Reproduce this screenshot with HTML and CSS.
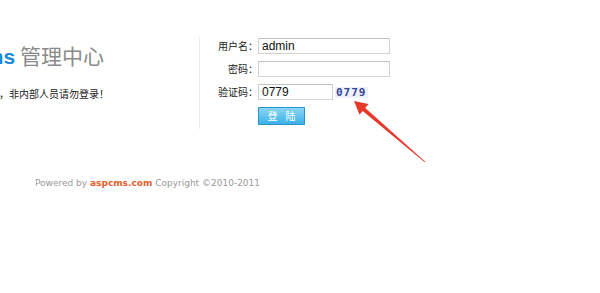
FILE: index.html
```html
<!DOCTYPE html>
<html lang="zh-CN">
<head>
  <meta charset="UTF-8" />
  <title>管理中心</title>
  <link rel="stylesheet" href="styles.css">
</head>
<body>
  <div class="page">
    <div class="main">
      <div class="brand">
        <h1 class="title"><b>aspcms</b> 管理中心</h1>
        <p class="notice">网站管理后台，非内部人员请勿登录！</p>
      </div>

      <form class="login">
        <label class="label" for="user">用户名：</label>
        <input class="field" type="text" id="user" value="admin" />

        <label class="label" for="pass">密码：</label>
        <input class="field" type="password" id="pass" />

        <label class="label" for="code">验证码：</label>
        <div class="code-row">
          <input class="field short" type="text" id="code" value="0779" />
          <span class="captcha">0779</span>
        </div>

        <span></span>
        <div><button class="btn" type="button">登 陆</button></div>
      </form>
    </div>

    <div class="footer">Powered by <a href="#">aspcms.com</a> Copyright &copy;2010-2011</div>

    <svg class="arrow" width="100" height="80" viewBox="0 0 100 80">
      <polygon points="14,6 28.5,9 25.3,12.9 85.3,66.7 84.7,67.3 22.7,15.9 19.5,19.8" fill="#e8382c" />
    </svg>
  </div>
</body>
</html>
```

FILE: styles.css
```css
body {
  margin: 0;
  background: #ffffff;
  font-family: "Liberation Sans", "Noto Sans CJK SC", sans-serif;
  color: #333333;
}

.page {
  position: relative;
  height: 293px;
  overflow: hidden;
}

.main {
  display: flex;
  padding-top: 37px;
}

.brand {
  width: 200px;
  height: 92px;
  padding-top: 5px;
  box-sizing: border-box;
  border-right: 1px solid #ececec;
  overflow: hidden;
  white-space: nowrap;
}

.title {
  margin: 0 0 0 -63px;
  font-size: 21px;
  line-height: 26px;
  font-weight: normal;
  color: #8a8a8a;
  font-family: "Noto Sans CJK SC", sans-serif;
}

.title b {
  font-family: "Liberation Sans", sans-serif;
  font-weight: bold;
  color: #1a8ad8;
}

.notice {
  margin: 17px 0 0 -61px;
  font-size: 10px;
  line-height: 14px;
  color: #222222;
  font-family: "Noto Sans CJK SC", sans-serif;
}

.login {
  display: grid;
  grid-template-columns: 58px auto;
  grid-template-rows: 16px 16px 16px 18px;
  row-gap: 7px;
  align-items: center;
  margin: 1px 0 0;
}

.label {
  text-align: right;
  font-size: 10px;
  line-height: 16px;
  color: #222222;
  font-family: "Noto Sans CJK SC", sans-serif;
}

.field {
  display: block;
  box-sizing: border-box;
  width: 132px;
  height: 16px;
  margin: 0;
  padding: 0 3px;
  border: 1px solid #d2d2d2;
  border-top-color: #c2c2c2;
  font-family: "Liberation Sans", sans-serif;
  font-size: 12px;
  color: #111111;
  outline: none;
}

.code-row {
  display: flex;
  align-items: center;
  gap: 2px;
}

.field.short {
  width: 75px;
}

.captcha {
  padding: 0 1px;
  background: #eef1fa;
  font-family: "DejaVu Sans Mono", monospace;
  font-weight: bold;
  font-size: 11px;
  line-height: 11px;
  letter-spacing: 1px;
  color: #34469c;
}

.btn {
  display: block;
  width: 47px;
  height: 18px;
  padding: 0;
  border: 1px solid #2a96cc;
  background: linear-gradient(#8ad6f5, #3bb0e6);
  color: #ffffff;
  font-family: "Noto Sans CJK SC", sans-serif;
  font-size: 10px;
  line-height: 16px;
  letter-spacing: 3px;
  text-indent: 3px;
  cursor: pointer;
}

.footer {
  margin-top: 48px;
  padding-left: 35px;
  font-family: "DejaVu Sans", sans-serif;
  font-size: 9px;
  line-height: 12px;
  color: #9a9a9a;
}

.footer a {
  color: #e4612b;
  font-weight: bold;
  text-decoration: none;
}

.arrow {
  position: absolute;
  left: 340px;
  top: 95px;
}
```
